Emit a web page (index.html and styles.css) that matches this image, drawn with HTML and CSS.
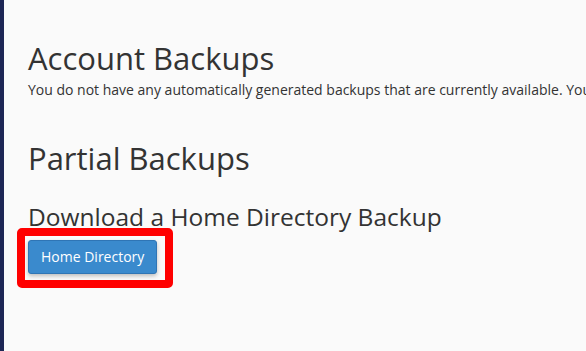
FILE: index.html
```html
<!DOCTYPE html>
<html lang="en">
<head>
    <meta charset="UTF-8">
    <meta name="viewport" content="width=device-width, initial-scale=1.0">
    <title>Backup</title>
    <link rel="stylesheet" href="styles.css">
</head>
<body>
    <div class="page">
        <div class="side-bar"></div>

        <div class="content">
            <h1>Account Backups</h1>
            <p class="note">You do not have any automatically generated backups that are currently available. You can generate a backup at any time.</p>

            <h1 class="partial">Partial Backups</h1>
            <h2>Download a Home Directory Backup</h2>

            <div class="btn-wrap">
                <button type="button">Home Directory</button>
                <span class="highlight"></span>
            </div>
        </div>
    </div>
</body>
</html>
```

FILE: styles.css
```css
html, body {
    margin: 0;
    padding: 0;
    height: 100%;
}
body {
    font-family: "Open Sans", Arial, sans-serif;
    background-color: #fafafa;
    color: #333333;
    overflow: hidden;
}
.page {
    display: flex;
    height: 100%;
}
.side-bar {
    width: 4px;
    flex-shrink: 0;
    background-color: #1d2655;
}
.content {
    padding-left: 24px;
    padding-top: 38px;
    flex: 1;
    min-width: 0;
    overflow: hidden;
}
h1 {
    font-size: 31px;
    font-weight: 400;
    line-height: 40px;
    margin: 0;
    white-space: nowrap;
}
.note {
    font-size: 14px;
    line-height: 20px;
    margin: 2px 0 0;
    white-space: nowrap;
}
.partial {
    margin-top: 38px;
}
h2 {
    font-size: 24.5px;
    font-weight: 400;
    line-height: 32px;
    margin: 23px 0 0;
    white-space: nowrap;
}
.btn-wrap {
    position: relative;
    display: inline-block;
    margin-top: 7px;
}
button {
    font-family: "Open Sans", Arial, sans-serif;
    background-color: #3a8acd;
    color: #ffffff;
    font-size: 14px;
    line-height: 20px;
    padding: 6px 12px;
    width: 129px;
    height: 34px;
    box-sizing: border-box;
    white-space: nowrap;
    border: 1px solid #2f75b5;
    border-radius: 3px;
    box-shadow: 0 2px 4px rgba(0,0,0,0.25);
    cursor: pointer;
    display: block;
}
.highlight {
    position: absolute;
    left: -11px;
    top: -12px;
    width: 140px;
    height: 44px;
    border: 8px solid #ff0000;
    border-radius: 5px;
    pointer-events: none;
}
```
